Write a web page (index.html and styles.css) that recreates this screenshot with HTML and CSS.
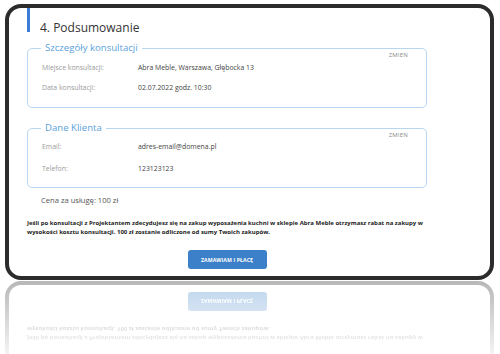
FILE: index.html
```html
<!DOCTYPE html>
<html lang="pl">
<head>
<meta charset="utf-8">
<title>Podsumowanie</title>
<link rel="stylesheet" href="styles.css">
</head>
<body>
<div class="frame">
  <div class="content">
    <header class="step-header">
      <span class="step-bar"></span>
      <h1 class="step-title">4. Podsumowanie</h1>
    </header>

    <fieldset class="box">
      <legend class="box-title">Szczegóły konsultacji</legend>
      <a class="edit" href="#">ZMIEŃ</a>
      <div class="row"><span class="label">Miejsce konsultacji:</span><span class="value">Abra Meble, Warszawa, Głębocka 13</span></div>
      <div class="row"><span class="label">Data konsultacji:</span><span class="value">02.07.2022 godz. 10:30</span></div>
    </fieldset>

    <fieldset class="box box-client">
      <legend class="box-title">Dane Klienta</legend>
      <a class="edit" href="#">ZMIEŃ</a>
      <div class="row"><span class="label">Email:</span><span class="value">adres-email@domena.pl</span></div>
      <div class="row"><span class="label">Telefon:</span><span class="value">123123123</span></div>
    </fieldset>

    <p class="price">Cena za usługę: 100 zł</p>

    <p class="note">Jeśli po konsultacji z Projektantem zdecydujesz się na zakup wyposażenia kuchni w sklepie Abra Meble otrzymasz rabat na zakupy w<br>wysokości kosztu konsultacji. 100 zł zostanie odliczone od sumy Twoich zakupów.</p>

    <div class="actions">
      <button class="btn" type="button">ZAMAWIAM I PŁACĘ</button>
    </div>
  </div>
</div>

<div class="reflection" aria-hidden="true">
  <div class="frame frame-mirror">
    <div class="content">
      <p class="note">Jeśli po konsultacji z Projektantem zdecydujesz się na zakup wyposażenia kuchni w sklepie Abra Meble otrzymasz rabat na zakupy w<br>wysokości kosztu konsultacji. 100 zł zostanie odliczone od sumy Twoich zakupów.</p>
      <div class="actions">
        <span class="btn">ZAMAWIAM I PŁACĘ</span>
      </div>
    </div>
  </div>
</div>
</body>
</html>
```

FILE: styles.css
```css
html, body {
  margin: 0;
  padding: 0;
  background: #ffffff;
}

body {
  font-family: "Open Sans", "Noto Sans", sans-serif;
  color: #333;
}

.frame {
  box-sizing: border-box;
  width: 489px;
  height: 276px;
  margin: 4px 0 0 5px;
  border: 4px solid #2c2c2c;
  border-radius: 16px;
  background: #fff;
  padding: 0 63px 0 18px;
}

.content {
  width: 400px;
  display: flex;
  flex-direction: column;
}

.step-header {
  display: flex;
  align-items: flex-end;
  height: 24px;
}

.step-bar {
  width: 3px;
  height: 24px;
  background: #3b7dd8;
  flex: none;
}

.step-title {
  margin: 0 0 -3px 10px;
  font-size: 12px;
  line-height: 14px;
  font-weight: 400;
  color: #333;
}

.box {
  position: relative;
  margin: 10px 0 0 0;
  min-width: 0;
  padding: 9px 14px 14px;
  border: 1px solid #b8d6f1;
  border-radius: 5px;
  display: flex;
  flex-direction: column;
  gap: 10px;
}

.box-client {
  margin-top: 14px;
  padding-top: 8px;
  gap: 12px;
  padding-bottom: 13px;
}

.box-title {
  margin-left: -1px;
  padding: 0 4px;
  font-size: 9.6px;
  line-height: 12px;
  color: #5a9fdc;
}

.edit {
  position: absolute;
  top: -3px;
  right: 10px;
  padding: 0 8px;
  background: #fff;
  font-size: 6px;
  line-height: 8px;
  color: #888;
  text-decoration: none;
  letter-spacing: 0.2px;
}

.row {
  display: flex;
  font-size: 6.9px;
  line-height: 10px;
}

.label {
  width: 96px;
  flex: none;
  color: #9a9a9a;
}

.value {
  color: #444;
}

.price {
  margin: 7px 0 0 14px;
  font-size: 7.6px;
  line-height: 10px;
  color: #555;
}

.note {
  margin: 14px 0 0 0;
  font-size: 6px;
  line-height: 9px;
  font-weight: 700;
  color: #222;
  white-space: nowrap;
}

.actions {
  display: flex;
  justify-content: center;
  margin-top: 13px;
}

.btn {
  display: flex;
  align-items: center;
  justify-content: center;
  width: 79px;
  height: 19px;
  padding: 0;
  border: 0;
  border-radius: 3px;
  background: #3b80c8;
  color: #fff;
  font-family: "Open Sans", "Noto Sans", sans-serif;
  font-size: 5.2px;
  font-weight: 700;
  letter-spacing: 0.1px;
}

/* mirrored reflection under the card */
.reflection {
  height: 73px;
  margin-top: 1px;
  overflow: hidden;
  -webkit-mask-image: linear-gradient(to bottom, rgba(0, 0, 0, 0.34), rgba(0, 0, 0, 0) 86px);
  mask-image: linear-gradient(to bottom, rgba(0, 0, 0, 0.34), rgba(0, 0, 0, 0) 86px);
}

.frame-mirror {
  margin-top: 0;
  transform: scaleY(-1);
  display: flex;
  flex-direction: column;
  justify-content: flex-end;
  padding-bottom: 7px;
}

.frame-mirror .note {
  margin-top: 0;
}
```
